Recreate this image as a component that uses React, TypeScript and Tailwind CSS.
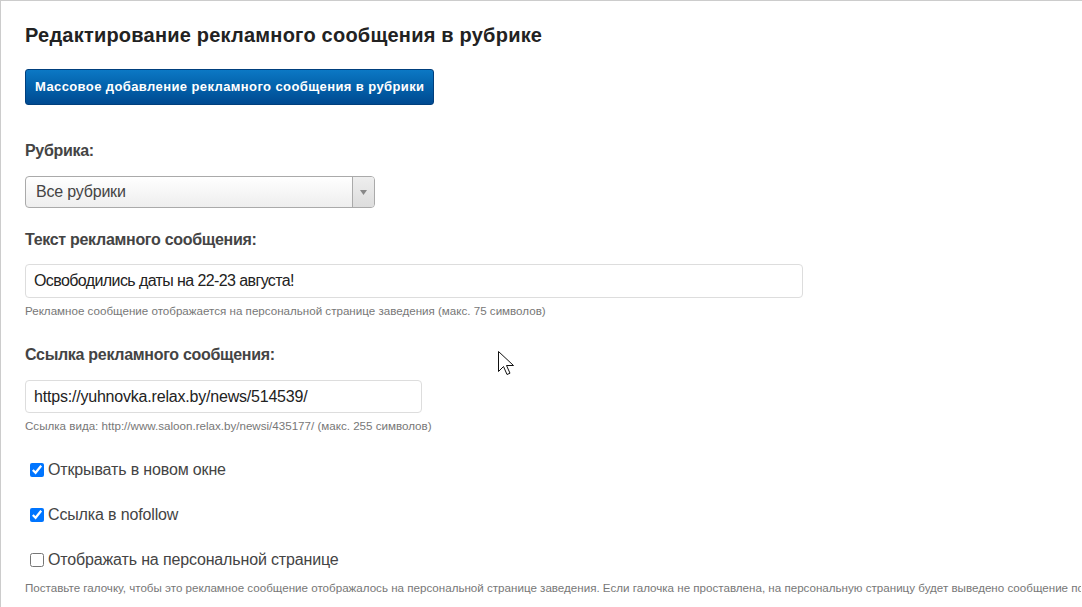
import React from 'react';

const Field: React.FC<{ label: string; children: React.ReactNode }> = ({ label, children }) => (
  <div>
    <div className="text-[16px] leading-[20px] font-bold text-[#444] tracking-[-0.3px]">{label}</div>
    {children}
  </div>
);

const Hint: React.FC<{ children: React.ReactNode; className?: string }> = ({ children, className }) => (
  <p className={`text-[11.6px] leading-[14px] text-[#777] whitespace-nowrap ${className ?? ''}`}>{children}</p>
);

const CheckRow: React.FC<{ label: string; checked?: boolean; className?: string }> = ({ label, checked, className }) => (
  <label className={`flex items-center h-[20px] pl-[5px] ${className ?? ''}`}>
    <input type="checkbox" defaultChecked={checked} className="m-0 w-[14px] h-[14px]" />
    <span className="ml-[4px] text-[16px] text-[#444] tracking-[-0.15px]">{label}</span>
  </label>
);

export default function App() {
  return (
    <div
      className="relative w-[1082px] h-[607px] overflow-hidden bg-white border-l border-t border-[#ccc] pl-[24px] pt-[22px]"
      style={{ fontFamily: '"Liberation Sans", Arial, sans-serif' }}
    >
      <h1 className="text-[20px] leading-[24px] font-bold text-[#222] tracking-[0.22px]">
        Редактирование рекламного сообщения в рубрике
      </h1>

      <button className="mt-[22px] h-[36px] px-[9px] rounded-[3px] border border-[#003f7d] bg-gradient-to-b from-[#0c78c4] to-[#004a91] text-white text-[13px] font-bold tracking-[0.4px]">
        Массовое добавление рекламного сообщения в рубрики
      </button>

      <div className="mt-[36px]">
        <Field label="Рубрика:">
          <div className="mt-[15px] flex w-[350px] h-[32px] rounded-[4px] border border-[#aaa] bg-gradient-to-b from-white to-[#eee] overflow-hidden">
            <div className="flex-1 flex items-center pl-[10px] text-[16px] text-[#444] tracking-[-0.2px]">Все рубрики</div>
            <div className="w-[22px] border-l border-[#aaa] bg-gradient-to-b from-[#eee] to-[#ddd] flex items-center justify-center">
              <svg width="7" height="5" viewBox="0 0 7 5">
                <path d="M0 0h7L3.5 5z" fill="#888" />
              </svg>
            </div>
          </div>
        </Field>
      </div>

      <div className="mt-[22px]">
        <Field label="Текст рекламного сообщения:">
          <div className="mt-[14px] w-[778px] h-[34px] rounded-[4px] border border-[#ddd] flex items-center pl-[8px] text-[16px] text-[#222] tracking-[-0.6px]">
            Освободились даты на 22-23 августа!
          </div>
        </Field>
        <Hint className="mt-[6px]">
          Рекламное сообщение отображается на персональной странице заведения (макс. 75 символов)
        </Hint>
      </div>

      <div className="mt-[27px]">
        <Field label="Ссылка рекламного сообщения:">
          <div className="mt-[15px] w-[397px] h-[33px] rounded-[4px] border border-[#ddd] flex items-center pl-[8px] text-[16px] text-[#222] tracking-[-0.2px]">
            https://yuhnovka.relax.by/news/514539/
          </div>
        </Field>
        <Hint className="mt-[6px]">
          Ссылка вида: http://www.saloon.relax.by/newsi/435177/ (макс. 255 символов)
        </Hint>
      </div>

      <CheckRow className="mt-[27px]" label="Открывать в новом окне" checked />
      <CheckRow className="mt-[25px]" label="Ссылка в nofollow" checked />
      <CheckRow className="mt-[25px]" label="Отображать на персональной странице" />
      <div className="mt-[11px] w-[1056px] overflow-hidden">
        <Hint>
          Поставьте галочку, чтобы это рекламное сообщение отображалось на персональной странице заведения. Если галочка не проставлена, на персональную страницу будет выведено сообщение по умолчанию.
        </Hint>
      </div>

      {/* mouse pointer */}
      <svg className="absolute left-[496px] top-[349px]" width="20" height="28" viewBox="0 0 20 28">
        <path d="M1.5 1.5v20l5-5 3.5 8 3-1.3-3.5-7.7h7z" fill="#fff" stroke="#111" strokeWidth="1" strokeLinejoin="miter" />
      </svg>
    </div>
  );
}
